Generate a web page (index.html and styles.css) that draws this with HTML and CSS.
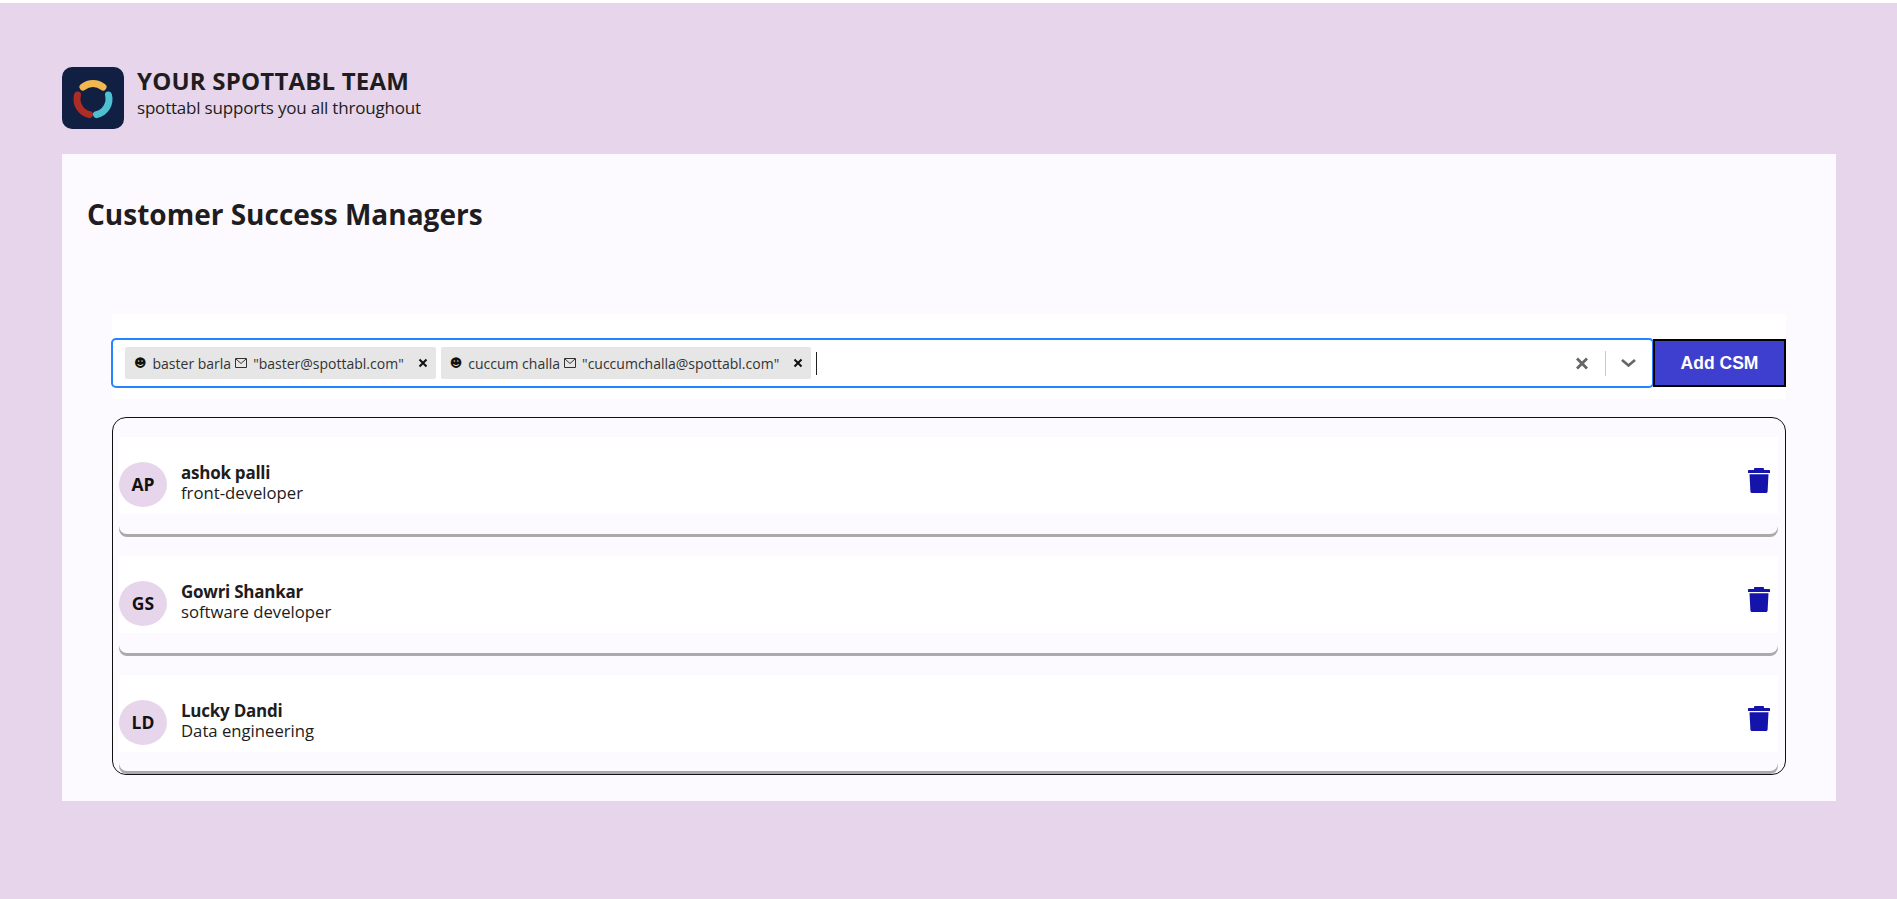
FILE: index.html
```html
<!DOCTYPE html>
<html>
<head>
<meta charset="utf-8">
<title>Your Spottabl Team</title>
<link rel="stylesheet" href="styles.css">
</head>

<body>
<div class="page">
	<div class="m-head">
		<svg class="logo" viewBox="0 0 62 62">
			<rect width="62" height="62" rx="10" fill="#101f42"/>
			<g fill="none" stroke-width="7" stroke-linecap="round">
				<path d="M21 20A16 16 0 0 1 41 20" stroke="#f2b84f"/>
				<path d="M15.500 28A16 16 0 0 0 27.500 47.600" stroke="#ad2d24"/>
				<path d="M46.500 28A16 16 0 0 1 34.500 47.600" stroke="#4dc1d0"/>
			</g>
		</svg>
		<div class="m-head-txt">
			<h1>YOUR SPOTTABL TEAM</h1>
			<p>spottabl supports you all throughout</p>
		</div>
	</div>

	<div class="m-panel">
		<h2>Customer Success Managers</h2>

		<div class="m-add">
			<div class="select">
				<div class="chip">
					<span class="face">☻</span>
					<span>baster barla</span>
					<svg class="mail" viewBox="0 0 12 10"><path d="M.5.500h11v9H.5zM1 1l5 4.500L11 1" fill="none" stroke="#333" stroke-width="1"/></svg>
					<span>"baster@spottabl.com"</span>
					<svg class="del" viewBox="0 0 10 10"><path d="M1.500 1.500l7 7M8.500 1.500l-7 7" stroke="#111" stroke-width="2"/></svg>
				</div>
				<div class="chip">
					<span class="face">☻</span>
					<span>cuccum challa</span>
					<svg class="mail" viewBox="0 0 12 10"><path d="M.5.500h11v9H.5zM1 1l5 4.500L11 1" fill="none" stroke="#333" stroke-width="1"/></svg>
					<span>"cuccumchalla@spottabl.com"</span>
					<svg class="del" viewBox="0 0 10 10"><path d="M1.500 1.500l7 7M8.500 1.500l-7 7" stroke="#111" stroke-width="2"/></svg>
				</div>
				<div class="cursor"></div>
				<svg class="clear" viewBox="0 0 12 13"><path d="M1 1.500l10 10M11 1.500l-10 10" stroke="#666" stroke-width="2.800"/></svg>
				<div class="sep"></div>
				<svg class="arrow" viewBox="0 0 15 8"><path d="M1 1l6.500 5.500L14 1" fill="none" stroke="#666" stroke-width="2.600"/></svg>
			</div>
			<button class="btn">Add CSM</button>
		</div>

		<div class="m-list">
			<div class="item">
				<div class="row">
					<div class="avatar">AP</div>
					<div class="info">
						<strong>ashok palli</strong>
						<span>front-developer</span>
					</div>
					<svg class="trash" viewBox="0 0 22 25"><path d="M6 2V1.200C6 .5 6.500 0 7.200 0h7.600C15.500 0 16 .5 16 1.200V2h5c.6 0 1 .4 1 1v2H0V3c0-.6.4-1 1-1zM1.500 6.300h19L19.600 23.500c-.1.900-.7 1.500-1.600 1.500H4c-.9 0-1.500-.6-1.600-1.500z" fill="#1414aa"/></svg>
				</div>
			</div>
			<div class="item">
				<div class="row">
					<div class="avatar">GS</div>
					<div class="info">
						<strong>Gowri Shankar</strong>
						<span>software developer</span>
					</div>
					<svg class="trash" viewBox="0 0 22 25"><path d="M6 2V1.200C6 .5 6.500 0 7.200 0h7.600C15.500 0 16 .5 16 1.200V2h5c.6 0 1 .4 1 1v2H0V3c0-.6.4-1 1-1zM1.500 6.300h19L19.600 23.500c-.1.900-.7 1.500-1.600 1.500H4c-.9 0-1.500-.6-1.600-1.500z" fill="#1414aa"/></svg>
				</div>
			</div>
			<div class="item">
				<div class="row">
					<div class="avatar">LD</div>
					<div class="info">
						<strong>Lucky Dandi</strong>
						<span>Data engineering</span>
					</div>
					<svg class="trash" viewBox="0 0 22 25"><path d="M6 2V1.200C6 .5 6.500 0 7.200 0h7.600C15.500 0 16 .5 16 1.200V2h5c.6 0 1 .4 1 1v2H0V3c0-.6.4-1 1-1zM1.500 6.300h19L19.600 23.500c-.1.900-.7 1.500-1.600 1.500H4c-.9 0-1.500-.6-1.600-1.500z" fill="#1414aa"/></svg>
				</div>
			</div>
		</div>
	</div>
</div>
</body>
</html>
```

FILE: styles.css
```css
*{margin:0;padding:0;box-sizing:border-box;}
html{background:#fff;}
body{font-family:"Open Sans","Noto Sans",sans-serif;color:#201c20;}

.page{margin-top:3px;height:896px;padding:64px 61px 0 62px;background:#e7d6eb;overflow:hidden;}

/** header **/
.m-head{display:flex;gap:13px;height:62px;margin-bottom:25px;}
.logo{width:62px;height:62px;flex:none;}
.m-head-txt h1{font-size:24px;line-height:28px;font-weight:700;letter-spacing:.2px;}
.m-head-txt p{margin-top:2px;font-size:17px;line-height:22px;letter-spacing:-.2px;}

/** panel **/
.m-panel{height:647px;padding:0 50px;background:#fcfaff;}
.m-panel h2{margin:0 -25px;padding-top:40px;height:160px;font-size:28px;line-height:40px;font-weight:700;}

/** select and button **/
.m-add{display:flex;align-items:flex-start;height:85px;padding-top:24px;margin-bottom:18px;background:#fff;}
.select{flex:1;display:flex;align-items:center;height:50px;margin-left:-1px;padding:0 16px 0 12px;background:#fff;border:2px solid #2684ff;border-radius:5px;}
.chip{display:flex;align-items:center;height:32px;margin-right:5px;padding:0 8px 0 9px;background:#e6e6e6;border-radius:2px;font-size:14px;color:#333;}
.face{margin-right:6px;font-family:"DejaVu Sans",sans-serif;font-size:12px;color:#111;}
.mail{width:12px;height:10px;margin:0 6px 0 4px;}
.del{width:10px;height:10px;margin-left:14px;}
.cursor{width:1px;height:23px;background:#222;}
.clear{width:12px;height:13px;margin-left:auto;}
.sep{width:1px;height:25px;margin:0 15px 0 17px;background:#ccc;}
.arrow{width:15px;height:8px;}
.btn{width:133px;height:48px;margin:1px 0 0 -1px;background:#3f3fcf;border:2px solid #000;font-family:"Liberation Sans",sans-serif;font-size:17.500px;font-weight:bold;color:#fff;}

/** list **/
.m-list{height:358px;padding:0 7px 0 6px;border:1px solid #111;border-radius:14px;}
.item{height:116px;margin-bottom:3px;padding-top:19px;border-radius:8px;box-shadow:0 3px 0 #aaa;}
.item:last-child{height:115px;margin-bottom:0;}
.row{display:flex;align-items:flex-start;height:77px;padding-top:25px;background:#fff;}
.avatar{display:flex;align-items:center;justify-content:center;width:48px;height:45px;padding-bottom:2px;flex:none;background:#e7d6eb;border-radius:50%;font-size:17.500px;font-weight:700;color:#111;}
.info{display:flex;flex-direction:column;margin:1px 0 0 14px;font-size:16.700px;line-height:20px;}
.info strong{font-weight:700;font-size:17px;letter-spacing:-.25px;}
.trash{width:22px;height:25px;margin:6px 8px 0 auto;}
```
